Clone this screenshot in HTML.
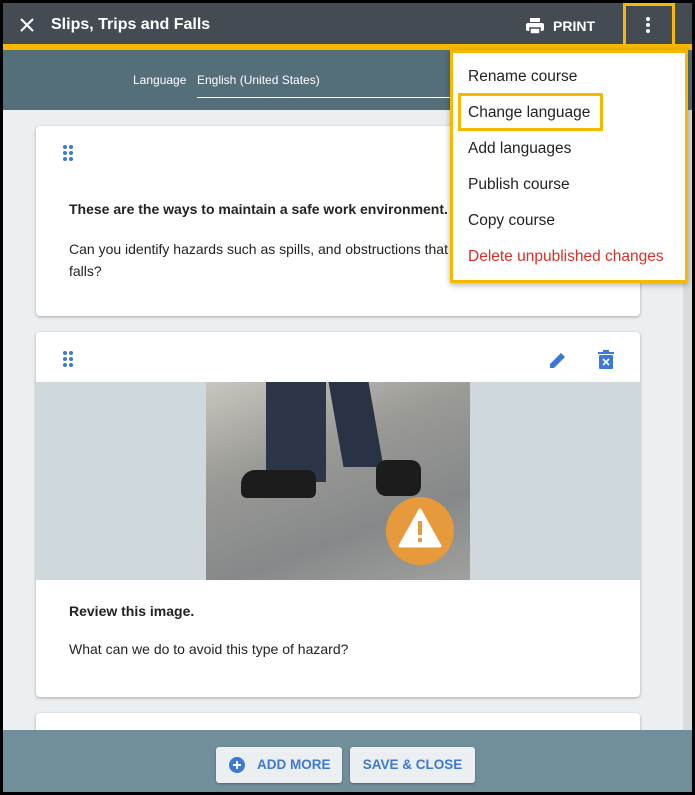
<!DOCTYPE html><html><head><style>
*{margin:0;padding:0;box-sizing:border-box}
body{width:695px;height:795px;background:#000;font-family:"Liberation Sans",sans-serif;position:relative;overflow:hidden}
.abs{position:absolute}
.card{position:absolute;left:36px;width:604px;background:#fff;border-radius:4px;box-shadow:0 1px 3px rgba(0,0,0,.3)}
.dots{position:absolute;width:12px;height:16px}
.dots i{position:absolute;width:4px;height:4px;border-radius:50%;background:#3b78d8}
.menu div{height:36px;line-height:36px;padding-left:15px;font-size:15.5px;color:#222}
.btn{position:absolute;top:747px;height:36px;background:#eceff1;border-radius:3px;color:#3b78d8;font-size:13.5px;font-weight:bold;line-height:36px;box-shadow:0 1px 2px rgba(0,0,0,.3)}
</style></head><body>
<div class="abs" style="left:3px;top:3px;width:689px;height:789px;background:#eceff1;overflow:hidden">
<div class="abs" style="left:0;top:0;width:689px;height:42px;background:#454b53"></div>
<div class="abs" style="left:0;top:41px;width:689px;height:6px;background:#f6b900"></div>
<div class="abs" style="left:0;top:47px;width:689px;height:60px;background:#546e7a"></div>
<svg class="abs" style="left:16px;top:14px" width="16" height="16"><path d="M2 2L14 14M14 2L2 14" stroke="#fff" stroke-width="2"/></svg>
<div class="abs" style="left:48px;top:13px;color:#fff;font-size:16px;font-weight:bold">Slips, Trips and Falls</div>
<svg class="abs" style="left:523px;top:15px" width="18" height="16"><rect x="4" y="0" width="10" height="4" fill="#fff"/><rect x="0" y="5" width="18" height="8" rx="2" fill="#fff"/><rect x="4" y="10" width="10" height="6" fill="#fff" stroke="#454b53" stroke-width="1.5"/></svg>
<div class="abs" style="left:550px;top:15px;color:#fff;font-size:14px;font-weight:bold">PRINT</div>
<div class="abs" style="left:620px;top:0;width:52px;height:42px;border:3px solid #f6b900;border-bottom:none"></div>
<div class="abs" style="left:643px;top:14px;width:4px;height:4px;border-radius:50%;background:#fff;box-shadow:0 6px 0 #fff,0 12px 0 #fff"></div>
<div class="abs" style="left:130px;top:70px;color:#fff;font-size:12px">Language</div>
<div class="abs" style="left:194px;top:70px;color:#fff;font-size:12px">English (United States)</div>
<div class="abs" style="left:194px;top:94px;width:260px;height:1px;background:#fff"></div>
<div class="abs" style="left:680px;top:107px;width:9px;height:620px;background:#d8dcdf"></div>

<div class="card" style="top:123px;height:190px;left:33px">
<div class="dots" style="left:27px;top:19px"><i style="left:0;top:0"></i><i style="left:6px;top:0"></i><i style="left:0;top:6px"></i><i style="left:6px;top:6px"></i><i style="left:0;top:12px"></i><i style="left:6px;top:12px"></i></div>
<div class="abs" style="left:33px;top:75px;font-size:14px;font-weight:bold;color:#222">These are the ways to maintain a safe work environment.</div>
<div class="abs" style="left:33px;top:112px;font-size:14px;color:#222;line-height:22px;width:400px">Can you identify hazards such as spills, and obstructions that falls?</div>
</div>

<div class="card" style="top:329px;height:365px;left:33px">
<div class="dots" style="left:27px;top:19px"><i style="left:0;top:0"></i><i style="left:6px;top:0"></i><i style="left:0;top:6px"></i><i style="left:6px;top:6px"></i><i style="left:0;top:12px"></i><i style="left:6px;top:12px"></i></div>
<svg class="abs" style="left:512px;top:18px" width="20" height="20"><path d="M2 18L2 14L13 3L17 7L6 18Z" fill="#3b78d8"/></svg>
<svg class="abs" style="left:562px;top:18px" width="16" height="20"><rect x="0" y="2" width="16" height="2" fill="#3b78d8"/><rect x="5" y="0" width="6" height="2" fill="#3b78d8"/><rect x="1" y="5" width="14" height="14" rx="1" fill="#3b78d8"/><path d="M5 9L11 15M11 9L5 15" stroke="#fff" stroke-width="1.6"/></svg>
<div class="abs" style="left:0;top:50px;width:604px;height:198px;background:#cfd8dc"></div>
<div class="abs" style="left:170px;top:50px;width:264px;height:198px;background:linear-gradient(160deg,#c9c6be 0%,#9a9a96 35%,#86898a 70%,#a0a19d 100%)"></div>
<div class="abs" style="left:230px;top:50px;width:60px;height:100px;background:#2d3648"></div>
<div class="abs" style="left:300px;top:50px;width:40px;height:85px;background:#2a3345;transform:skewX(10deg)"></div>
<div class="abs" style="left:205px;top:138px;width:75px;height:28px;background:#1c1c1c;border-radius:14px 8px 6px 6px"></div>
<div class="abs" style="left:340px;top:128px;width:45px;height:36px;background:#1c1c1c;border-radius:10px"></div>
<div class="abs" style="left:350px;top:165px;width:68px;height:68px;border-radius:50%;background:#e69a3c"></div>
<svg class="abs" style="left:362px;top:176px" width="44" height="40"><path d="M22 2L42 38H2Z" fill="#fff" stroke="#fff" stroke-width="3" stroke-linejoin="round"/><rect x="20" y="13" width="4" height="14" fill="#e69a3c"/><rect x="20" y="30" width="4" height="4" fill="#e69a3c"/></svg>
<div class="abs" style="left:33px;top:271px;font-size:14px;font-weight:bold;color:#222">Review this image.</div>
<div class="abs" style="left:33px;top:309px;font-size:14px;color:#222">What can we do to avoid this type of hazard?</div>
</div>
<div class="card" style="top:710px;height:60px;left:33px"></div>

<div class="abs" style="left:0;top:727px;width:689px;height:62px;background:#708f9b"></div>
</div>
<div class="btn" style="left:216px;width:126px"><svg class="abs" style="left:13px;top:10px" width="16" height="16"><circle cx="8" cy="8" r="8" fill="#3b78d8"/><path d="M8 4V12M4 8H12" stroke="#fff" stroke-width="2"/></svg><span style="position:absolute;left:41px">ADD MORE</span></div>
<div class="btn" style="left:350px;width:125px;text-align:center">SAVE &amp; CLOSE</div>

<div class="abs menu" style="left:450px;top:50px;width:238px;height:233px;background:#fff;border:3px solid #f6b900;padding-top:6px;box-shadow:0 2px 6px rgba(0,0,0,.3)">
<div>Rename course</div>
<div style="position:relative"><span style="position:absolute;left:5px;top:-2px;width:145px;height:38px;border:3px solid #f6b900"></span>Change language</div>
<div>Add languages</div>
<div>Publish course</div>
<div>Copy course</div>
<div style="color:#d93025">Delete unpublished changes</div>
</div>
</body></html>
